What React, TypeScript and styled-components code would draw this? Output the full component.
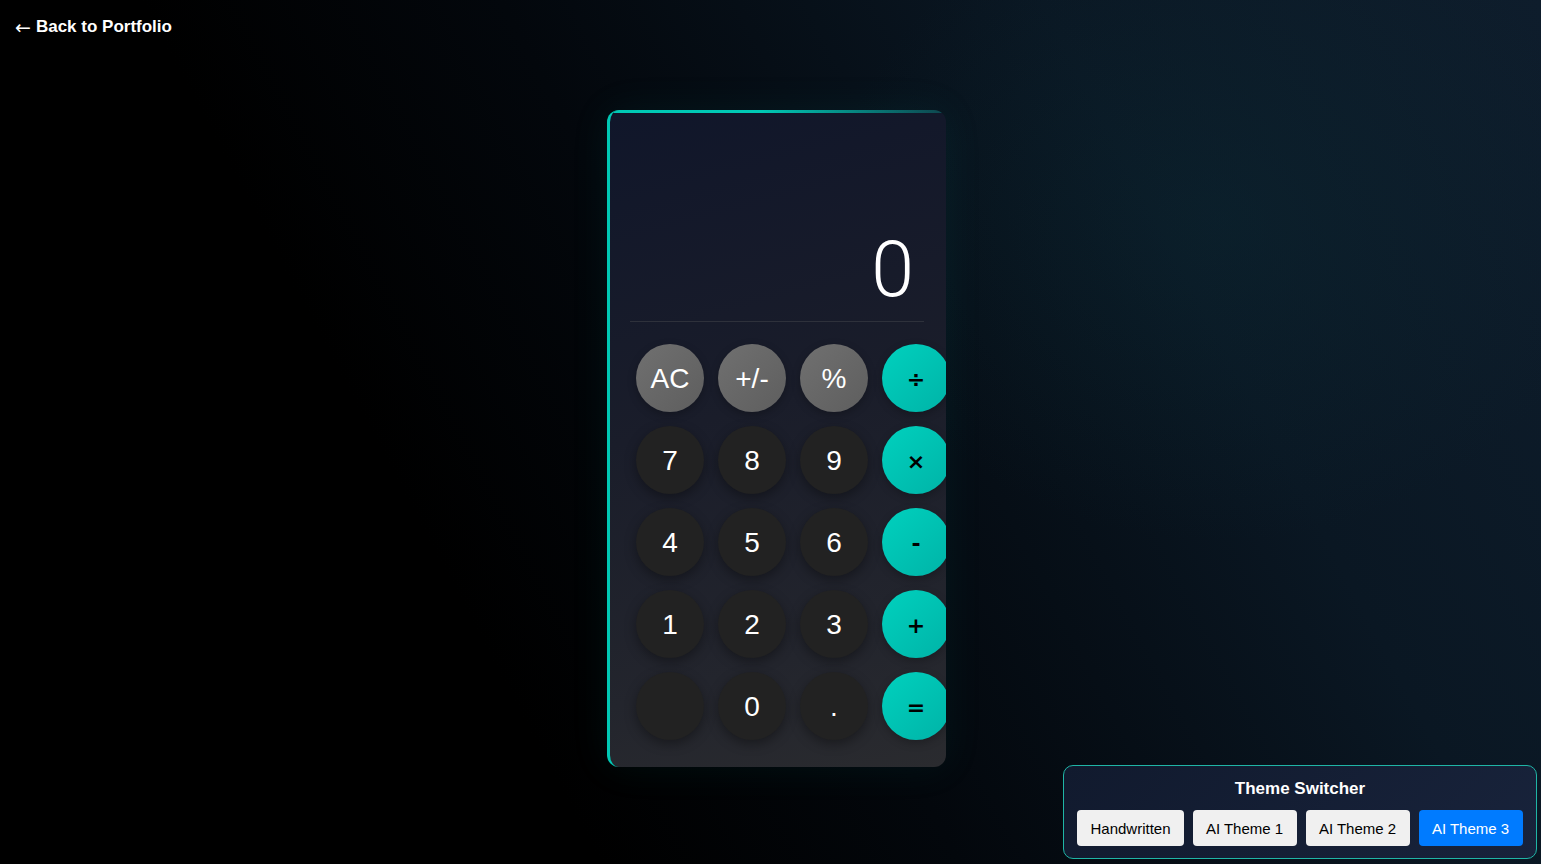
import styled, { createGlobalStyle } from "styled-components";

const GlobalStyle = createGlobalStyle`
	html, body {
		margin: 0;
		padding: 0;
		height: 100%;
	}
	body {
		font-family: "Liberation Sans", Arial, sans-serif;
		background: #000;
		overflow: hidden;
	}
`;

const Page = styled.div`
	position: relative;
	width: 100vw;
	height: 100vh;
	display: flex;
	justify-content: center;
	align-items: flex-start;
	padding: 110px 0 0 12px;
	box-sizing: border-box;
	background:
		radial-gradient(ellipse 560px 460px at 1220px 220px, rgba(12, 48, 58, 0.3), transparent 70%),
		linear-gradient(62deg, #000000 30%, #03070c 48%, #0a1723 75%, #0e1d2c 100%);
`;

const BackLink = styled.a`
	position: absolute;
	top: 17px;
	left: 15px;
	color: #fff;
	font-size: 17px;
	font-weight: 700;
	text-decoration: none;
	display: flex;
	align-items: center;
	gap: 5px;
`;

const Arrow = styled.span`
	font-family: "DejaVu Sans", sans-serif;
	font-weight: 400;
	font-size: 19px;
	line-height: 1;
`;

const Card = styled.div`
	position: relative;
	width: 339px;
	height: 657px;
	box-sizing: border-box;
	border-left: 3px solid #00c9b5;
	border-radius: 12px;
	padding: 23px 22px 27px 20px;
	overflow: hidden;
	display: flex;
	flex-direction: column;
	background: linear-gradient(165deg, #10162a 0%, #1a1d2a 45%, #23252d 80%, #2a2b2f 100%);
	box-shadow: 0 0 40px rgba(0, 180, 170, 0.08);

	&::before {
		content: "";
		position: absolute;
		top: 0;
		left: 0;
		right: 0;
		height: 3px;
		background: linear-gradient(90deg, #00c9b5 0%, #00c9b5 45%, rgba(0, 201, 181, 0.25) 100%);
	}
`;

const Display = styled.div`
	height: 189px;
	box-sizing: border-box;
	border-bottom: 1px solid #2e313b;
	display: flex;
	align-items: flex-end;
	justify-content: flex-end;
	padding: 0 10px 12px 0;
	color: #fff;
	font-family: Roboto, "Liberation Sans", sans-serif;
	font-weight: 300;
	font-size: 77px;
	line-height: 1;
`;

const Keypad = styled.div`
	margin: 22px 0 0 6px;
	display: grid;
	grid-template-columns: repeat(4, 68px);
	grid-auto-rows: 68px;
	gap: 14px;
`;

const Key = styled.button<{ kind: "num" | "fn" | "op" }>`
	width: 68px;
	height: 68px;
	border: none;
	border-radius: 50%;
	padding: 2px 0 0;
	display: flex;
	align-items: center;
	justify-content: center;
	font-family: ${(p) =>
		p.kind === "op" ? '"DejaVu Sans", sans-serif' : '"Liberation Sans", Arial, sans-serif'};
	font-size: ${(p) => (p.kind === "op" ? "22px" : "28px")};
	font-weight: ${(p) => (p.kind === "op" ? 700 : 400)};
	color: ${(p) => (p.kind === "op" ? "#000" : "#fff")};
	background: ${(p) =>
		p.kind === "op"
			? "linear-gradient(135deg, #00d1be 0%, #00b3a7 100%)"
			: p.kind === "fn"
			? "linear-gradient(135deg, #707070 0%, #5e5e5e 100%)"
			: "#222222"};
	box-shadow: ${(p) =>
		p.kind === "num"
			? "0 4px 12px rgba(0, 0, 0, 0.35)"
			: "0 3px 8px rgba(0, 0, 0, 0.25)"};
	cursor: pointer;
`;

const Switcher = styled.div`
	position: absolute;
	right: 4px;
	bottom: 5px;
	width: 474px;
	box-sizing: border-box;
	border: 1px solid #1fb5a6;
	border-radius: 10px;
	padding: 13px 13px 12px;
	background: linear-gradient(135deg, #111a2e 0%, #18233b 100%);
	display: flex;
	flex-direction: column;
	align-items: center;
	gap: 11px;
`;

const SwitcherTitle = styled.div`
	color: #fff;
	font-size: 17px;
	font-weight: 700;
	line-height: 20px;
`;

const SwitcherRow = styled.div`
	display: flex;
	gap: 9px;
`;

const ThemeButton = styled.button<{ active?: boolean }>`
	height: 36px;
	padding: 0 13px;
	min-width: 104px;
	border: none;
	border-radius: 4px;
	font-family: "Liberation Sans", Arial, sans-serif;
	font-size: 15px;
	background: ${(p) => (p.active ? "#007bff" : "#f0f0f0")};
	color: ${(p) => (p.active ? "#fff" : "#000")};
	cursor: pointer;
`;

type KeyDef = { label: string; kind: "num" | "fn" | "op" };

const keys: KeyDef[] = [
	{ label: "AC", kind: "fn" },
	{ label: "+/-", kind: "fn" },
	{ label: "%", kind: "fn" },
	{ label: "÷", kind: "op" },
	{ label: "7", kind: "num" },
	{ label: "8", kind: "num" },
	{ label: "9", kind: "num" },
	{ label: "×", kind: "op" },
	{ label: "4", kind: "num" },
	{ label: "5", kind: "num" },
	{ label: "6", kind: "num" },
	{ label: "-", kind: "op" },
	{ label: "1", kind: "num" },
	{ label: "2", kind: "num" },
	{ label: "3", kind: "num" },
	{ label: "+", kind: "op" },
	{ label: "", kind: "num" },
	{ label: "0", kind: "num" },
	{ label: ".", kind: "num" },
	{ label: "=", kind: "op" },
];

const themes = ["Handwritten", "AI Theme 1", "AI Theme 2", "AI Theme 3"];

export default function App() {
	return (
		<>
			<GlobalStyle />
			<Page>
				<BackLink href="#">
					<Arrow>←</Arrow> Back to Portfolio
				</BackLink>
				<Card>
					<Display>0</Display>
					<Keypad>
						{keys.map((k, i) => (
							<Key key={i} kind={k.kind}>
								{k.label}
							</Key>
						))}
					</Keypad>
				</Card>
				<Switcher>
					<SwitcherTitle>Theme Switcher</SwitcherTitle>
					<SwitcherRow>
						{themes.map((t) => (
							<ThemeButton key={t} active={t === "AI Theme 3"}>
								{t}
							</ThemeButton>
						))}
					</SwitcherRow>
				</Switcher>
			</Page>
		</>
	);
}
